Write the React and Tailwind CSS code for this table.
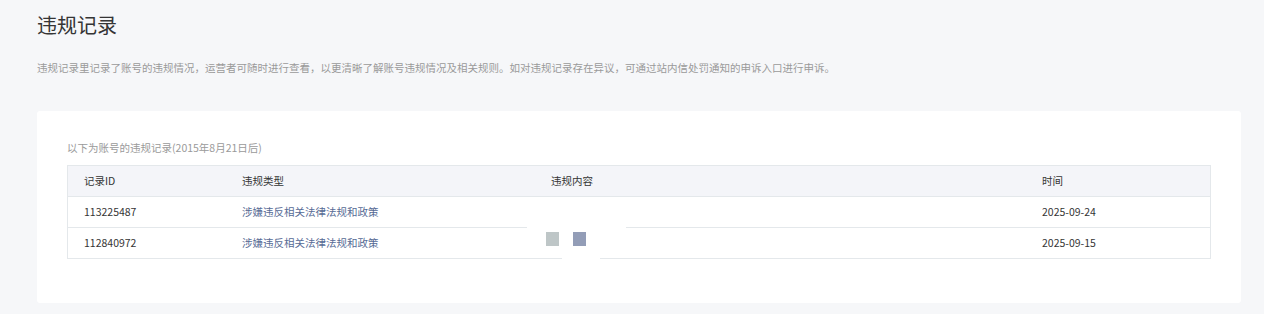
import React from 'react';

const records = [
    { id: '113225487', type: '涉嫌违反相关法律法规和政策', content: '', time: '2025-09-24' },
    { id: '112840972', type: '涉嫌违反相关法律法规和政策', content: '', time: '2025-09-15' },
];

const cols = 'grid grid-cols-[158px_309px_491px_1fr]';

const App = () => {
    return (
        <div
            className="min-h-[314px] bg-[#f6f7f9] pl-[37px] pr-[23px] pt-[11px] pb-[11px]"
            style={{ fontFamily: '"Noto Sans CJK SC", "Noto Sans", sans-serif' }}
        >
            <h1 className="text-[20px] leading-[28px] text-[#353535] font-normal">违规记录</h1>
            <p className="mt-[20px] text-[10.5px] leading-[18px] text-[#9a9a9a]">
                违规记录里记录了账号的违规情况，运营者可随时进行查看，以更清晰了解账号违规情况及相关规则。如对违规记录存在异议，可通过站内信处罚通知的申诉入口进行申诉。
            </p>

            <div className="mt-[34px] bg-white rounded-[3px] px-[30px] pt-[28px] pb-[44px]">
                <p className="text-[10.5px] leading-[18px] text-[#9a9a9a]">以下为账号的违规记录(2015年8月21日后)</p>

                <div className="relative mt-[8px] border border-[#e4e8eb] text-[10.5px] text-[#353535]">
                    <div className={`${cols} h-[31px] items-center bg-[#f4f5f9] border-b border-[#e4e8eb] pl-[16px]`}>
                        <span>记录ID</span>
                        <span>违规类型</span>
                        <span>违规内容</span>
                        <span>时间</span>
                    </div>
                    {records.map((r, i) => (
                        <div
                            key={r.id}
                            className={`${cols} items-center pl-[16px] ${i < records.length - 1 ? 'h-[31px] border-b border-[#e4e8eb]' : 'h-[30px]'}`}
                        >
                            <span>{r.id}</span>
                            <span className="text-[#576b95]">{r.type}</span>
                            <span>{r.content}</span>
                            <span>{r.time}</span>
                        </div>
                    ))}

                    {/* image placeholder overlay */}
                    <div className="absolute left-[459px] top-[61px] w-[99px] h-[20px] bg-white" />
                    <div className="absolute left-[494px] top-[75px] w-[38px] h-[18px] bg-white" />
                    <div className="absolute left-[478px] top-[66px] flex gap-[14px]">
                        <div className="w-[13px] h-[14px] bg-[#bec6c7]" />
                        <div className="w-[13px] h-[14px] bg-[#939db7]" />
                    </div>
                </div>
            </div>
        </div>
    );
};

export default App;
